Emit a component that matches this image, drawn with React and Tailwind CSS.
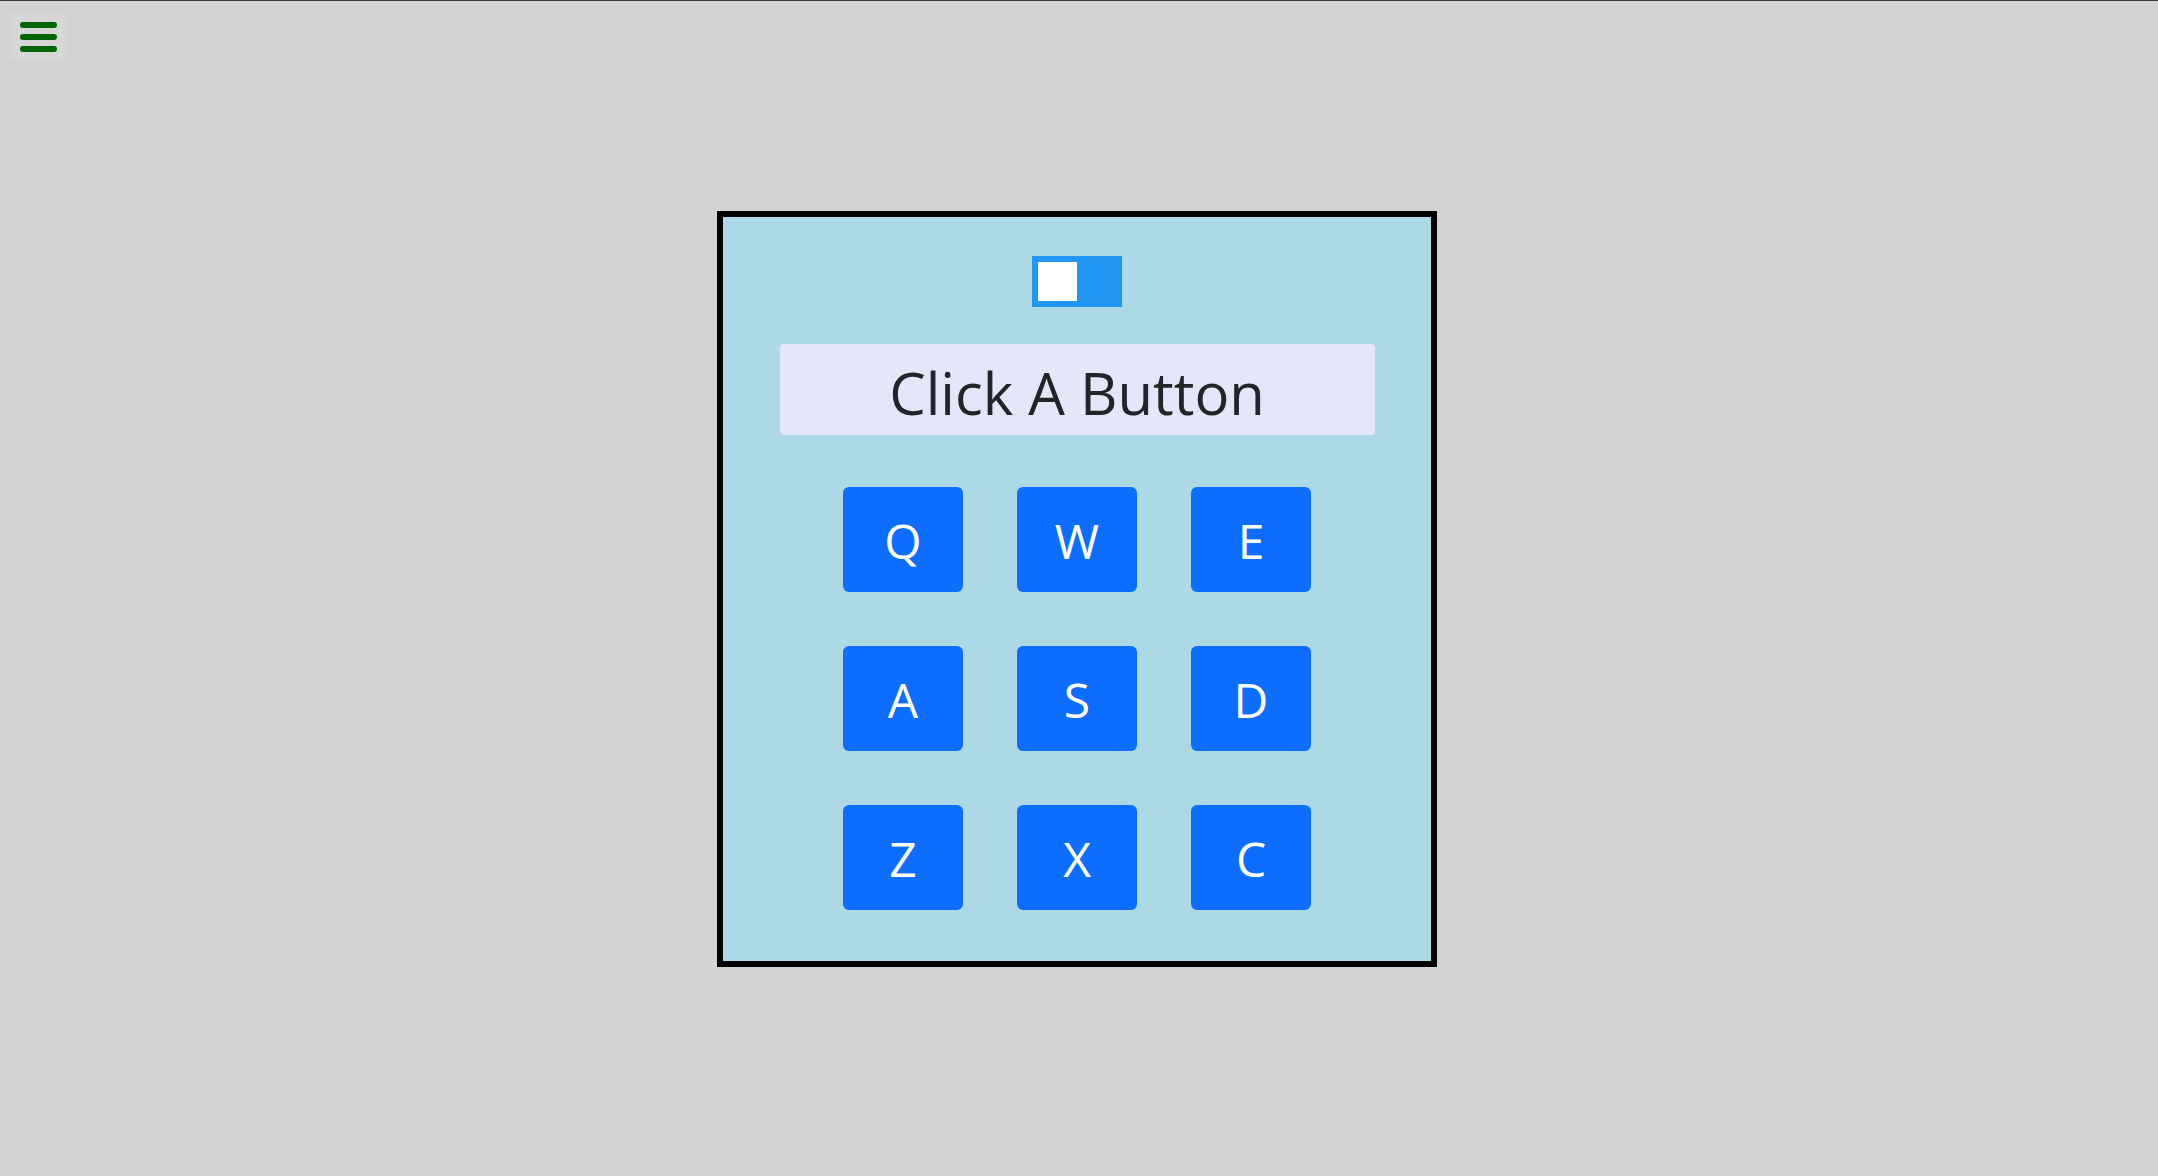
import { useState } from 'react';

const KEYS = ['Q', 'W', 'E', 'A', 'S', 'D', 'Z', 'X', 'C'];

export default function App() {
  const [on, setOn] = useState(false);
  const [display, setDisplay] = useState('Click A Button');

  return (
    <div
      className="relative min-h-screen h-screen bg-[#d3d3d3] border-t border-[#3a3a3a] flex items-center justify-center"
      style={{ fontFamily: '"Open Sans", "Noto Sans", sans-serif' }}
    >
      {/* menu toggle */}
      <button className="absolute top-[12px] left-[10px] w-[57px] h-[47px] bg-[#d6d6d6] flex flex-col items-center justify-center gap-[6px]">
        <span className="block w-[37px] h-[6px] rounded-full bg-[#006400]" />
        <span className="block w-[37px] h-[6px] rounded-full bg-[#006400]" />
        <span className="block w-[37px] h-[6px] rounded-full bg-[#006400]" />
      </button>

      <div className="mr-[4px] w-[720px] box-border border-[6px] border-black bg-[#add8e6] pt-[39px] pb-[51px] flex flex-col items-center">
        <button
          onClick={() => setOn(!on)}
          className={`w-[90px] h-[51px] bg-[#2196f3] p-[6px] flex ${on ? 'justify-end' : 'justify-start'}`}
        >
          <span className="block w-[39px] h-[39px] bg-white" />
        </button>

        <div className="mt-[37px] w-[595px] h-[91px] bg-[#e6e6fa] rounded-[4px] flex items-center justify-center pt-[7px] text-[#212529] text-[58px] leading-none">
          {display}
        </div>

        <div className="mt-[52px] grid grid-cols-[120px_120px_120px] gap-[54px]">
          {KEYS.map((k) => (
            <button
              key={k}
              onClick={() => setDisplay(k)}
              className="w-[120px] h-[105px] bg-[#0d6efd] rounded-[6px] text-white text-[48px] leading-none flex items-center justify-center pt-[4px]"
            >
              {k}
            </button>
          ))}
        </div>
      </div>
    </div>
  );
}
